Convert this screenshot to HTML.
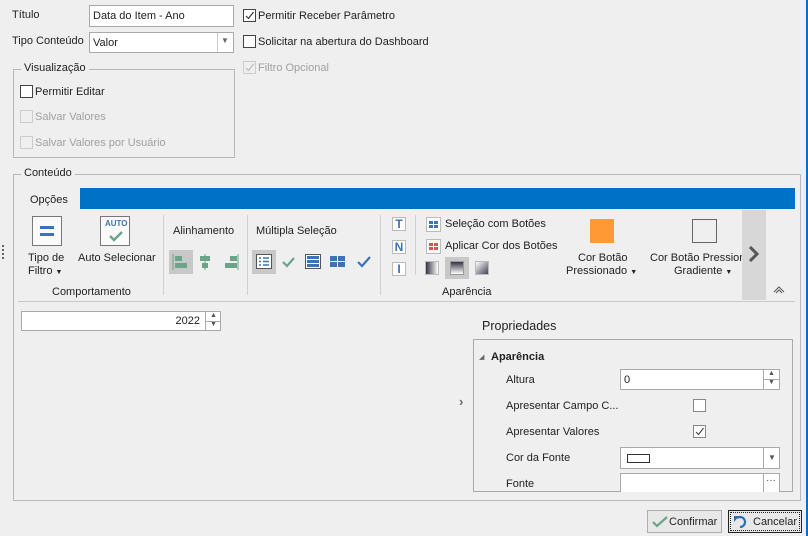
<!DOCTYPE html>
<html><head><meta charset="utf-8"><style>
*{box-sizing:border-box;margin:0;padding:0}
body{width:808px;height:536px;background:#efefef;font-family:"Liberation Sans",sans-serif;font-size:11px;color:#222;position:relative;overflow:hidden}
.a{position:absolute;white-space:nowrap}
.inp{position:absolute;background:#fff;border:1px solid #a9a9a9}
.cb{position:absolute;width:13px;height:13px;border:1px solid #444;background:#fff}
.cb.d{border-color:#ccc;background:#efefef}
.grp{position:absolute;border:1px solid #b8b8b8}
.lg{position:absolute;background:#efefef;padding:0 3px}
.dis{color:#a0a0a0}
.sep{position:absolute;width:1px;background:#d0d0d0}
.btn{position:absolute;border:1px solid #adadad;background:#e8e8e8}
</style></head><body>
<div class="a" style="left:806px;top:0;width:2px;height:536px;background:#0072c6"></div>

<div class="a" style="left:12px;top:9px">Título</div>
<div class="inp" style="left:89px;top:5px;width:145px;height:22px"><span class="a" style="left:3px;top:4px">Data do Item - Ano</span></div>
<div class="a" style="left:12px;top:35px">Tipo Conteúdo</div>
<div class="inp" style="left:89px;top:32px;width:145px;height:21px"><span class="a" style="left:3px;top:4px">Valor</span><span class="a" style="left:127px;top:0;width:1px;height:19px;background:#ccc"></span><span class="a" style="left:131px;top:3px;font-size:8px;color:#666">▼</span></div>

<div class="cb" style="left:243px;top:9px"><svg width="11" height="11" style="position:absolute;left:0;top:0"><path d="M2 6 L4.5 8.5 L9.5 2" stroke="#333" fill="none" stroke-width="1.2"/></svg></div>
<div class="a" style="left:258px;top:10px">Permitir Receber Parâmetro</div>
<div class="cb" style="left:243px;top:35px"></div>
<div class="a" style="left:258px;top:36px">Solicitar na abertura do Dashboard</div>
<div class="cb d" style="left:243px;top:61px"><svg width="11" height="11" style="position:absolute;left:0;top:0"><path d="M2 6 L4.5 8.5 L9.5 2" stroke="#bbb" fill="none" stroke-width="1.2"/></svg></div>
<div class="a dis" style="left:258px;top:62px">Filtro Opcional</div>

<div class="grp" style="left:13px;top:69px;width:222px;height:89px"></div>
<div class="lg" style="left:21px;top:62px">Visualização</div>
<div class="cb" style="left:20px;top:85px"></div><div class="a" style="left:35px;top:86px">Permitir Editar</div>
<div class="cb d" style="left:20px;top:110px"></div><div class="a dis" style="left:35px;top:111px">Salvar Valores</div>
<div class="cb d" style="left:20px;top:136px"></div><div class="a dis" style="left:35px;top:137px">Salvar Valores por Usuário</div>

<div class="grp" style="left:13px;top:174px;width:788px;height:327px"></div>
<div class="lg" style="left:21px;top:167px">Conteúdo</div>
<div class="a" style="left:2px;top:245px;width:2px;height:14px;border-left:2px dotted #666"></div>

<div class="a" style="left:30px;top:194px">Opções</div>
<div class="a" style="left:80px;top:188px;width:715px;height:21px;background:#0072c6"></div>

<div class="a" style="left:32px;top:216px;width:30px;height:30px;border:1px solid #777;background:#fafafa"><div class="a" style="left:7px;top:9px;width:14px;height:3px;background:#3b73b9"></div><div class="a" style="left:7px;top:16px;width:14px;height:3px;background:#3b73b9"></div></div>
<div class="a" style="left:28px;top:252px">Tipo de</div>
<div class="a" style="left:28px;top:265px">Filtro <span style="font-size:7px">▼</span></div>
<div class="a" style="left:100px;top:216px;width:30px;height:30px;border:1px solid #777;background:#fafafa"><span class="a" style="left:4px;top:2px;font-size:8px;font-weight:bold;color:#3b73b9">AUTO</span><svg class="a" style="left:7px;top:13px" width="16" height="12"><path d="M2 6 L6 10 L14 2" stroke="#6aa58a" stroke-width="2.4" fill="none"/></svg></div>
<div class="a" style="left:78px;top:252px">Auto Selecionar</div>
<div class="a" style="left:52px;top:286px">Comportamento</div>
<div class="sep" style="left:163px;top:215px;height:80px"></div>

<div class="a" style="left:173px;top:225px">Alinhamento</div>
<div class="a" style="left:169px;top:250px;width:24px;height:24px;background:#c8c8c8"></div>
<svg class="a" style="left:172px;top:253px" width="70" height="18"><path d="M1 1 V17" stroke="#6aa58a"/><rect x="3" y="3" width="7" height="5" fill="#6aa58a"/><rect x="3" y="10" width="12" height="5" fill="#6aa58a"/><rect x="28" y="3" width="10" height="5" fill="#6aa58a"/><rect x="30" y="10" width="6" height="5" fill="#6aa58a"/><path d="M33 1 V17" stroke="#6aa58a"/><rect x="58" y="3" width="7" height="5" fill="#6aa58a"/><rect x="53" y="10" width="12" height="5" fill="#6aa58a"/><path d="M66 1 V17" stroke="#6aa58a"/></svg>
<div class="sep" style="left:247px;top:215px;height:80px"></div>

<div class="a" style="left:256px;top:225px">Múltipla Seleção</div>
<div class="a" style="left:252px;top:250px;width:24px;height:24px;background:#c8c8c8"></div>
<svg class="a" style="left:255px;top:253px" width="120" height="18"><rect x="1.5" y="1.5" width="15" height="14" fill="#fff" stroke="#555"/><path d="M4 5h2M8 5h6M4 8.5h2M8 8.5h6M4 12h2M8 12h6" stroke="#3b73b9" stroke-width="1.5"/><path d="M28 9 L32 13 L39 5" stroke="#6aa58a" stroke-width="2.2" fill="none"/><rect x="50.5" y="1.5" width="15" height="14" fill="#fff" stroke="#555"/><rect x="52" y="3" width="12" height="3" fill="#3b73b9"/><rect x="52" y="7" width="12" height="3" fill="#3b73b9"/><rect x="52" y="11" width="12" height="3" fill="#3b73b9"/><rect x="75" y="3" width="7" height="5" fill="#3b73b9"/><rect x="83" y="3" width="7" height="5" fill="#3b73b9"/><rect x="75" y="9" width="7" height="5" fill="#3b73b9"/><rect x="83" y="9" width="7" height="5" fill="#3b73b9"/><path d="M103 9 L107 13 L115 4" stroke="#3b73b9" stroke-width="2.2" fill="none"/></svg>
<div class="sep" style="left:380px;top:215px;height:80px"></div>

<div class="a" style="left:392px;top:217px;width:14px;height:14px;background:#fff;border:1px solid #bbb;color:#3b73b9;font-weight:bold;font-size:12px;text-align:center;line-height:12px">T</div>
<div class="a" style="left:392px;top:240px;width:14px;height:14px;background:#fff;border:1px solid #bbb;color:#3b73b9;font-weight:bold;font-size:12px;text-align:center;line-height:12px">N</div>
<div class="a" style="left:392px;top:262px;width:14px;height:14px;background:#fff;border:1px solid #bbb;color:#3b73b9;font-weight:bold;font-size:12px;text-align:center;line-height:12px">I</div>
<div class="sep" style="left:415px;top:215px;height:60px"></div>
<svg class="a" style="left:426px;top:217px" width="15" height="15"><rect x=".5" y=".5" width="14" height="14" fill="#fff" stroke="#bbb"/><rect x="3" y="4" width="4" height="3" fill="#3b73b9"/><rect x="8" y="4" width="4" height="3" fill="#3b73b9"/><rect x="3" y="8" width="4" height="3" fill="#3b73b9"/><rect x="8" y="8" width="4" height="3" fill="#3b73b9"/></svg>
<div class="a" style="left:445px;top:218px">Seleção com Botões</div>
<svg class="a" style="left:426px;top:239px" width="15" height="15"><rect x=".5" y=".5" width="14" height="14" fill="#fff" stroke="#bbb"/><rect x="3" y="4" width="4" height="3" fill="#d9534f"/><rect x="8" y="4" width="4" height="3" fill="#d9534f"/><rect x="3" y="8" width="4" height="3" fill="#d9534f"/><rect x="8" y="8" width="4" height="3" fill="#d9534f"/></svg>
<div class="a" style="left:445px;top:240px">Aplicar Cor dos Botões</div>
<div class="a" style="left:445px;top:257px;width:24px;height:22px;background:#c8c8c8"></div>
<div class="a" style="left:425px;top:261px;width:14px;height:14px;border:1px solid #bbb;background:linear-gradient(90deg,#334 ,#fff)"></div>
<div class="a" style="left:450px;top:261px;width:14px;height:14px;border:1px solid #999;background:linear-gradient(180deg,#334,#fff)"></div>
<div class="a" style="left:475px;top:261px;width:14px;height:14px;border:1px solid #bbb;background:linear-gradient(135deg,#fff,#445)"></div>
<div class="a" style="left:442px;top:286px">Aparência</div>

<div class="a" style="left:590px;top:219px;width:24px;height:24px;background:#ff9933"></div>
<div class="a" style="left:578px;top:252px">Cor Botão</div>
<div class="a" style="left:566px;top:265px">Pressionado <span style="font-size:7px">▼</span></div>
<div class="a" style="left:692px;top:219px;width:25px;height:24px;border:1px solid #666"></div>
<div class="a" style="left:650px;top:252px;width:92px;overflow:hidden">Cor Botão Pressiona</div>
<div class="a" style="left:674px;top:265px">Gradiente <span style="font-size:7px">▼</span></div>
<div class="a" style="left:742px;top:210px;width:24px;height:90px;background:#d7d7d7"></div>
<svg class="a" style="left:748px;top:246px" width="12" height="16"><path d="M2 1 L9 8 L2 15" stroke="#555" stroke-width="3" fill="none"/></svg>
<svg class="a" style="left:773px;top:285px" width="12" height="9"><path d="M1 7 L6 2 L11 7 M3 8 L6 5 L9 8" stroke="#555" fill="none"/></svg>
<div class="a" style="left:18px;top:301px;width:777px;height:1px;background:#c8c8c8"></div>

<div class="inp" style="left:21px;top:311px;width:200px;height:20px"><span class="a" style="right:20px;top:3px">2022</span><span class="a" style="left:183px;top:0;width:1px;height:18px;background:#aaa"></span><span class="a" style="left:184px;top:9px;width:15px;height:1px;background:#aaa"></span><span class="a" style="left:188px;top:0;font-size:7px;color:#555">▲</span><span class="a" style="left:188px;top:9px;font-size:7px;color:#555">▼</span></div>

<div class="a" style="left:459px;top:394px;color:#666;font-size:13px;font-weight:bold">›</div>
<div class="a" style="left:482px;top:319px;font-size:12.5px">Propriedades</div>
<div class="grp" style="left:473px;top:339px;width:320px;height:153px;border-color:#a9a9a9"></div>
<div class="a" style="left:479px;top:353px;font-size:7px;color:#666">◢</div>
<div class="a" style="left:491px;top:351px;font-weight:bold">Aparência</div>
<div class="a" style="left:506px;top:374px">Altura</div>
<div class="inp" style="left:620px;top:369px;width:160px;height:21px"><span class="a" style="left:3px;top:4px">0</span><span class="a" style="left:142px;top:0;width:1px;height:19px;background:#aaa"></span><span class="a" style="left:143px;top:9px;width:15px;height:1px;background:#aaa"></span><span class="a" style="left:147px;top:0;font-size:7px;color:#555">▲</span><span class="a" style="left:147px;top:9px;font-size:7px;color:#555">▼</span></div>
<div class="a" style="left:506px;top:400px">Apresentar Campo C...</div>
<div class="cb" style="left:693px;top:399px;border-color:#888"></div>
<div class="a" style="left:506px;top:426px">Apresentar Valores</div>
<div class="cb" style="left:693px;top:425px;border-color:#888"><svg width="11" height="11" style="position:absolute;left:0;top:0"><path d="M2 6 L4.5 8.5 L9.5 2" stroke="#444" fill="none" stroke-width="1.1"/></svg></div>
<div class="a" style="left:506px;top:452px">Cor da Fonte</div>
<div class="inp" style="left:620px;top:447px;width:160px;height:22px"><span class="a" style="left:6px;top:6px;width:23px;height:9px;border:1px solid #333"></span><span class="a" style="left:142px;top:0;width:1px;height:20px;background:#aaa"></span><span class="a" style="left:147px;top:5px;font-size:8px;color:#555">▼</span></div>
<div class="a" style="left:506px;top:478px">Fonte</div>
<div class="inp" style="left:620px;top:473px;width:160px;height:19px;border-bottom:none"><span class="a" style="left:142px;top:0;width:1px;height:18px;background:#aaa"></span><span class="a" style="left:145px;top:1px;font-size:10px;color:#444">···</span></div>

<div class="btn" style="left:647px;top:510px;width:75px;height:23px"><svg class="a" style="left:4px;top:5px" width="16" height="12"><path d="M1 6 L5 10 L15 1" stroke="#6aa58a" stroke-width="2.2" fill="none"/></svg><span class="a" style="left:21px;top:5px">Confirmar</span></div>
<div class="btn" style="left:728px;top:510px;width:74px;height:23px;border:1px solid #222"><div class="a" style="left:1px;top:1px;width:70px;height:19px;border:1px dotted #222"></div><svg class="a" style="left:4px;top:4px" width="16" height="14"><path d="M4 3 A5 5 0 1 1 7 12" stroke="#2f6db5" stroke-width="2.2" fill="none"/><path d="M1 1 L6 1 L1 7Z" fill="#2f6db5"/></svg><span class="a" style="left:24px;top:5px">Cancelar</span></div>
</body></html>
